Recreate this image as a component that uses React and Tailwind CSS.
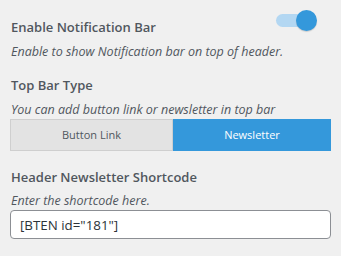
import React, { useState } from 'react';

const App = () => {
  const [enabled, setEnabled] = useState(true);
  const [type, setType] = useState('newsletter');
  const [shortcode, setShortcode] = useState('[BTEN id="181"]');

  return (
    <div className="w-[341px] h-[256px] bg-[#f0f0f0] text-[#50575e] px-[10px] pt-[10px] font-['Open_Sans','Liberation_Sans',sans-serif]">
      {/* Enable toggle */}
      <div className="flex items-start justify-between">
        <span className="mt-[8px] pl-[1px] text-[13px] leading-[18px] font-semibold">Enable Notification Bar</span>
        <button
          onClick={() => setEnabled(!enabled)}
          className="relative w-[41px] h-[21px] mr-[14px]"
        >
          <span className={`absolute left-0 top-[4px] w-[34px] h-[13px] rounded-full ${enabled ? 'bg-[#b3d7f2]' : 'bg-[#ccc]'}`}></span>
          <span className={`absolute top-0 w-[21px] h-[21px] rounded-full shadow-[0_1px_1px_rgba(0,0,0,0.15)] ${enabled ? 'left-[20px] bg-[#3498db]' : 'left-0 bg-white'}`}></span>
        </button>
      </div>
      <p className="mt-[7px] pl-[1px] text-[12.5px] leading-[18px] italic">
        Enable to show Notification bar on top of header.
      </p>

      {/* Top bar type */}
      <div className="mt-[15px] pl-[1px] text-[13px] leading-[18px] font-semibold">Top Bar Type</div>
      <p className="mt-[7px] pl-[1px] text-[12.5px] leading-[18px] italic">
        You can add button link or newsletter in top bar
      </p>
      <div className="flex h-[32px]">
        <button
          onClick={() => setType('button')}
          className={`w-[163px] text-[11px] border ${type === 'button' ? 'bg-[#3498db] text-white border-[#3498db]' : 'bg-[#e3e3e3] text-[#50575e] border-[#cfcfcf]'}`}
        >
          Button Link
        </button>
        <button
          onClick={() => setType('newsletter')}
          className={`flex-1 text-[11px] border ${type === 'newsletter' ? 'bg-[#3498db] text-white border-[#3498db]' : 'bg-[#e3e3e3] text-[#50575e] border-[#cfcfcf]'}`}
        >
          Newsletter
        </button>
      </div>

      {/* Shortcode */}
      <div className="mt-[17px] pl-[1px] text-[13px] leading-[18px] font-semibold">Header Newsletter Shortcode</div>
      <p className="mt-[6px] pl-[1px] text-[12.5px] leading-[18px] italic">Enter the shortcode here.</p>
      <input
        value={shortcode}
        onChange={(e) => setShortcode(e.target.value)}
        className="block w-full h-[29px] bg-white border border-[#8c8f94] rounded-[4px] px-[9px] text-[13.33px] text-[#2c3338] outline-none"
      />
    </div>
  );
};

export default App;
